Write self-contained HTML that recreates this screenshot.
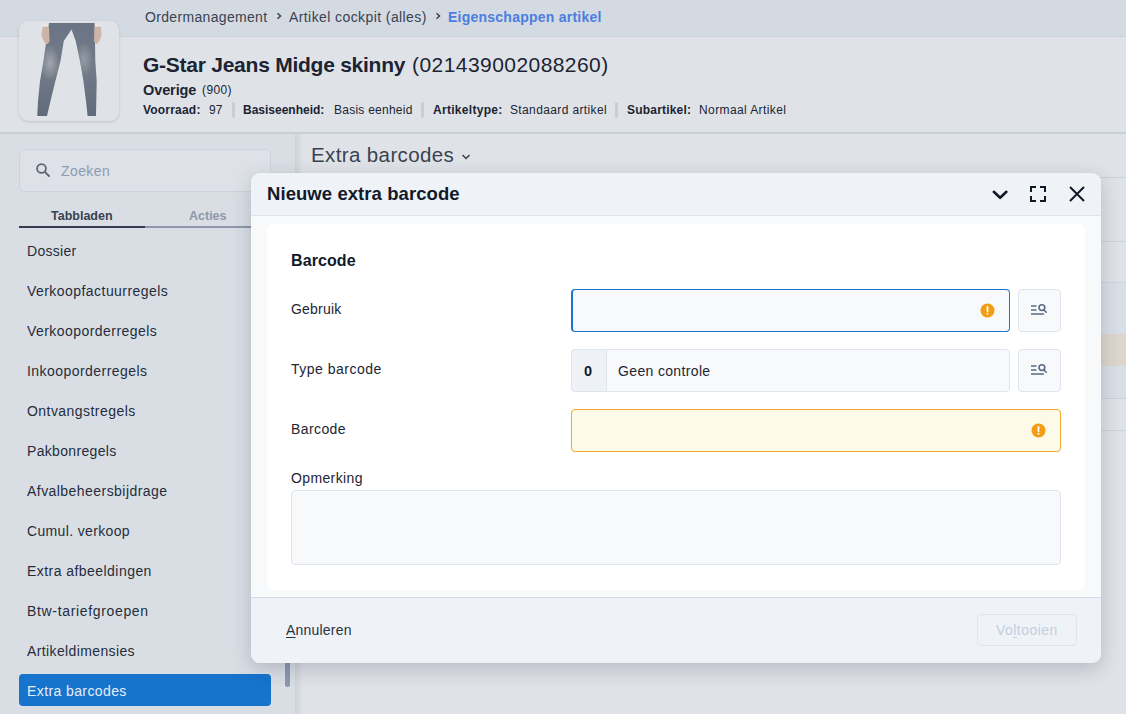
<!DOCTYPE html>
<html><head><meta charset="utf-8">
<style>
*{box-sizing:border-box;margin:0;padding:0}
html,body{width:1126px;height:714px;overflow:hidden}
body{font-family:"Liberation Sans",sans-serif;background:#dfe2e7;position:relative;color:#1e2533}
.t{position:absolute;white-space:nowrap;line-height:1}
.b{position:absolute}
</style></head><body>
<div class="b" style="left:0px;top:0px;width:1126px;height:134px;background:#dfe3e8"></div>
<div class="b" style="left:0px;top:0px;width:1126px;height:37px;background:#d4dae2;border-bottom:1px solid #c9d0da"></div>
<div class="b" style="left:0px;top:132px;width:1126px;height:2px;background:#c9cfd8"></div>
<div class="t" style="left:145px;top:10px;font-size:14px;color:#3a4251;letter-spacing:0.33px;">Ordermanagement</div>
<svg class="b" style="left:274px;top:10.5px" width="10" height="10" viewBox="0 0 10 10"><path d="M3.5 2.2 L6.5 5 L3.5 7.8" fill="none" stroke="#3a4251" stroke-width="1.5"/></svg>
<div class="t" style="left:289px;top:10px;font-size:14px;color:#3a4251;letter-spacing:0.41px;">Artikel cockpit (alles)</div>
<svg class="b" style="left:433px;top:10.5px" width="10" height="10" viewBox="0 0 10 10"><path d="M3.5 2.2 L6.5 5 L3.5 7.8" fill="none" stroke="#3a4251" stroke-width="1.5"/></svg>
<div class="t" style="left:448px;top:10px;font-size:14px;color:#4a7ee0;font-weight:bold;letter-spacing:0.24px;">Eigenschappen artikel</div>
<div class="b" style="left:19px;top:21px;width:100px;height:100px;background:#dfe3e8;border-radius:9px;box-shadow:0 1px 3px rgba(0,0,0,.14);overflow:hidden">
<svg width="100" height="100" viewBox="0 0 100 100">
<defs>
<radialGradient id="hl1" cx="31" cy="42" r="14" gradientUnits="userSpaceOnUse" gradientTransform="translate(31 42) scale(0.7 1.3) translate(-31 -42)"><stop offset="0" stop-color="#a0a6ad"/><stop offset="1" stop-color="#a0a6ad" stop-opacity="0"/></radialGradient><linearGradient id="dv" x1="0" y1="0" x2="0" y2="1"><stop offset="0" stop-color="#6b7485"/><stop offset=".5" stop-color="#737b89"/><stop offset="1" stop-color="#616a7a"/></linearGradient>
<radialGradient id="hl2" cx="65" cy="38" r="13" gradientUnits="userSpaceOnUse" gradientTransform="translate(65 38) scale(0.7 1.3) translate(-65 -38)"><stop offset="0" stop-color="#959ca6"/><stop offset="1" stop-color="#959ca6" stop-opacity="0"/></radialGradient>
</defs>
<path d="M25 2 L30 2 L30 20 L27 23 L23 18 L22 8 Z" fill="#e8e8e8"/>
<path d="M75 2 L80 2 L82 8 L82 18 L78 23 L76 20 Z" fill="#e8e8e8"/>
<path d="M30 2 L75.6 2 L76 20 L76.3 40 L77.7 60 L77.3 80 L77 95 L68.6 95 L67 80 L64.4 60 L61 40 L56.7 20 L52.5 8.4 L44.8 20 L41.5 40 L36.4 60 L31.5 80 L28 95 L18.2 95 L19 80 L21 60 L24.5 40 L27.3 20 Z" fill="url(#dv)"/>
<path d="M30 2 L75.6 2 L76 20 L76.3 40 L77.7 60 L77.3 80 L77 95 L68.6 95 L67 80 L64.4 60 L61 40 L56.7 20 L52.5 8.4 L44.8 20 L41.5 40 L36.4 60 L31.5 80 L28 95 L18.2 95 L19 80 L21 60 L24.5 40 L27.3 20 Z" fill="url(#hl1)"/>
<path d="M30 2 L75.6 2 L76 20 L76.3 40 L77.7 60 L77.3 80 L77 95 L68.6 95 L67 80 L64.4 60 L61 40 L56.7 20 L52.5 8.4 L44.8 20 L41.5 40 L36.4 60 L31.5 80 L28 95 L18.2 95 L19 80 L21 60 L24.5 40 L27.3 20 Z" fill="url(#hl2)"/>
<path d="M23.5 6 Q26 5 30 6 L30.5 20 Q29 24 27 23 Q23 19 22.5 13 Z" fill="#cdb4a6"/>
<path d="M75.5 6 Q79 5 82 6 L82.5 13 Q82 19 78 23 Q76 23 75 20 Z" fill="#cdb4a6"/>
</svg></div>
<div class="t" style="left:143px;top:54.2px;font-size:21px;color:#1c2333;font-weight:bold;letter-spacing:-0.25px;">G-Star Jeans Midge skinny</div>
<div class="t" style="left:412px;top:54.2px;font-size:21px;color:#1c2333;letter-spacing:0.44px;">(021439002088260)</div>
<div class="t" style="left:143px;top:82.7px;font-size:14.5px;color:#1c2333;font-weight:bold;letter-spacing:-0.1px;">Overige</div>
<div class="t" style="left:202px;top:84px;font-size:12px;color:#1c2333;letter-spacing:0.4px;">(900)</div>
<div class="t" style="left:143px;top:104px;font-size:12px;color:#1c2333;font-weight:bold;letter-spacing:0.2px;">Voorraad:</div>
<div class="t" style="left:209px;top:104px;font-size:12px;color:#1c2333;">97</div>
<div class="b" style="left:232px;top:102px;width:3px;height:16px;border-radius:2px;background:#c8cdd6"></div>
<div class="t" style="left:243px;top:104px;font-size:12px;color:#1c2333;font-weight:bold;">Basiseenheid:</div>
<div class="t" style="left:334px;top:104px;font-size:12px;color:#1c2333;letter-spacing:0.25px;">Basis eenheid</div>
<div class="b" style="left:421px;top:102px;width:3px;height:16px;border-radius:2px;background:#c8cdd6"></div>
<div class="t" style="left:433px;top:104px;font-size:12px;color:#1c2333;font-weight:bold;letter-spacing:0.3px;">Artikeltype:</div>
<div class="t" style="left:510px;top:104px;font-size:12px;color:#1c2333;letter-spacing:0.37px;">Standaard artikel</div>
<div class="b" style="left:615px;top:102px;width:3px;height:16px;border-radius:2px;background:#c8cdd6"></div>
<div class="t" style="left:627px;top:104px;font-size:12px;color:#1c2333;font-weight:bold;letter-spacing:0.2px;">Subartikel:</div>
<div class="t" style="left:699px;top:104px;font-size:12px;color:#1c2333;letter-spacing:0.4px;">Normaal Artikel</div>
<div class="b" style="left:0px;top:134px;width:295px;height:580px;background:#d9dee5"></div>
<div class="b" style="left:295px;top:134px;width:8px;height:580px;background:linear-gradient(to right,rgba(40,50,70,.09),rgba(40,50,70,0))"></div>
<div class="b" style="left:19px;top:149px;width:252px;height:43px;border:1px solid #cdd3dc;border-radius:5px;background:#dee2e8"></div>
<svg class="b" style="left:35px;top:162px" width="16" height="16" viewBox="0 0 16 16"><circle cx="6.5" cy="6.5" r="4.4" fill="none" stroke="#5d6778" stroke-width="1.8"/><path d="M9.8 9.8 L14 14" stroke="#5d6778" stroke-width="1.9" stroke-linecap="round"/></svg>
<div class="t" style="left:61px;top:164px;font-size:14px;color:#8d9bb0;letter-spacing:0.4px;">Zoeken</div>
<div class="t" style="left:51px;top:210px;font-size:12.5px;color:#3a4251;font-weight:bold;">Tabbladen</div>
<div class="t" style="left:189px;top:210px;font-size:12.5px;color:#8d98aa;font-weight:bold;">Acties</div>
<div class="b" style="left:19px;top:226px;width:126px;height:2px;background:#333d4f"></div>
<div class="b" style="left:145px;top:226px;width:126px;height:2px;background:#8d98aa"></div>
<div class="t" style="left:27px;top:244px;font-size:14px;color:#262d3a;letter-spacing:0.3px;">Dossier</div>
<div class="t" style="left:27px;top:284px;font-size:14px;color:#262d3a;letter-spacing:0.45px;">Verkoopfactuurregels</div>
<div class="t" style="left:27px;top:324px;font-size:14px;color:#262d3a;letter-spacing:0.45px;">Verkooporderregels</div>
<div class="t" style="left:27px;top:364px;font-size:14px;color:#262d3a;letter-spacing:0.45px;">Inkooporderregels</div>
<div class="t" style="left:27px;top:404px;font-size:14px;color:#262d3a;letter-spacing:0.45px;">Ontvangstregels</div>
<div class="t" style="left:27px;top:444px;font-size:14px;color:#262d3a;letter-spacing:0.33px;">Pakbonregels</div>
<div class="t" style="left:27px;top:484px;font-size:14px;color:#262d3a;letter-spacing:0.45px;">Afvalbeheersbijdrage</div>
<div class="t" style="left:27px;top:524px;font-size:14px;color:#262d3a;letter-spacing:0.35px;">Cumul. verkoop</div>
<div class="t" style="left:27px;top:564px;font-size:14px;color:#262d3a;letter-spacing:0.45px;">Extra afbeeldingen</div>
<div class="t" style="left:27px;top:604px;font-size:14px;color:#262d3a;letter-spacing:0.66px;">Btw-tariefgroepen</div>
<div class="t" style="left:27px;top:644px;font-size:14px;color:#262d3a;letter-spacing:0.38px;">Artikeldimensies</div>
<div class="b" style="left:19px;top:674px;width:252px;height:32px;background:#1674cc;border-radius:4px"></div>
<div class="t" style="left:27px;top:684px;font-size:14px;color:#e6edf7;letter-spacing:0.4px;">Extra barcodes</div>
<div class="b" style="left:285px;top:655px;width:5px;height:32px;border-radius:3px;background:#8b98ad"></div>
<div class="t" style="left:311px;top:144.5px;font-size:20.5px;color:#3a4251;letter-spacing:0.38px;">Extra barcodes</div>
<svg class="b" style="left:461px;top:153px" width="10" height="8" viewBox="0 0 10 8"><path d="M1.5 2 L5 5.5 L8.5 2" fill="none" stroke="#3a4251" stroke-width="1.5"/></svg>
<div class="b" style="left:1100px;top:177px;width:26px;height:1px;background:#c9d1dc"></div>
<div class="b" style="left:1100px;top:241px;width:26px;height:1px;background:#c9d1dc"></div>
<div class="b" style="left:1100px;top:282px;width:26px;height:52px;background:#d9dfe7;border-top:1px solid #cdd4de"></div>
<div class="b" style="left:1100px;top:334px;width:26px;height:32px;background:#ddd6cc"></div>
<div class="b" style="left:1100px;top:366px;width:26px;height:32px;background:#d9dfe7"></div>
<div class="b" style="left:1100px;top:398px;width:26px;height:1px;background:#c9d1dc"></div>
<div class="b" style="left:1100px;top:430px;width:26px;height:1px;background:#c9d1dc"></div>
<div class="b" style="left:251px;top:173px;width:850px;height:490px;background:#eff3f8;border-radius:9px;box-shadow:0 6px 20px rgba(20,30,50,.20);overflow:hidden">
<div class="b" style="left:0px;top:43px;width:850px;height:381px;background:#f7f9fb"></div>
<div class="b" style="left:0px;top:42px;width:850px;height:1px;background:#dce3eb"></div>
<div class="t" style="left:16px;top:12px;font-size:18.5px;color:#121a2a;font-weight:bold;letter-spacing:0.07px;">Nieuwe extra barcode</div>
<svg class="b" style="left:739px;top:14px" width="20" height="16" viewBox="0 0 20 16"><path d="M3.8 4.8 L10.1 10.8 L16.4 4.8" fill="none" stroke="#111827" stroke-width="2.6" stroke-linecap="round" stroke-linejoin="round"/></svg>
<svg class="b" style="left:779px;top:13px" width="16" height="16" viewBox="0 0 16 16"><path d="M1 6 V1 H6 M10 1 H15 V6 M15 10 V15 H10 M6 15 H1 V10" fill="none" stroke="#111827" stroke-width="2"/></svg>
<svg class="b" style="left:817px;top:12px" width="18" height="18" viewBox="0 0 18 18"><path d="M2 2 L16 16 M16 2 L2 16" fill="none" stroke="#111827" stroke-width="2"/></svg>
<div class="b" style="left:16px;top:51px;width:818px;height:366px;background:#fff;border-radius:5px"></div>
<div class="t" style="left:40px;top:80.3px;font-size:16px;color:#121a2a;font-weight:bold;letter-spacing:0.1px;">Barcode</div>
<div class="t" style="left:40px;top:129px;font-size:14px;color:#1e2533;letter-spacing:0.2px;">Gebruik</div>
<div class="t" style="left:40px;top:189px;font-size:14px;color:#1e2533;letter-spacing:0.5px;">Type barcode</div>
<div class="t" style="left:40px;top:249px;font-size:14px;color:#1e2533;letter-spacing:0.4px;">Barcode</div>
<div class="t" style="left:40px;top:298px;font-size:14px;color:#1e2533;letter-spacing:0.37px;">Opmerking</div>
<div class="b" style="left:320px;top:116px;width:439px;height:43px;border:1.5px solid #1a73d0;border-left-width:2px;border-radius:4px;background:#f7f9fb"></div>
<svg class="b" style="left:729px;top:130px" width="15" height="15" viewBox="0 0 15 15"><circle cx="7.5" cy="7.5" r="7" fill="#f29d12"/><path d="M7.5 3.8 V8.2" stroke="#fff" stroke-width="1.8" stroke-linecap="round"/><circle cx="7.5" cy="10.8" r="1" fill="#fff"/></svg>
<div class="b" style="left:767px;top:116px;width:43px;height:43px;border:1px solid #dfe5ed;border-radius:4px;background:#f7f9fb"></div>
<svg class="b" style="left:779px;top:130px" width="20" height="14" viewBox="0 0 20 14"><path d="M1 3 H6.5 M1 7 H6.5 M1 11 H14" stroke="#5a6b85" stroke-width="1.6"/><circle cx="11.9" cy="4.6" r="2.9" fill="none" stroke="#5a6b85" stroke-width="1.6"/><path d="M14 7 L16.2 9.2" stroke="#5a6b85" stroke-width="1.6" stroke-linecap="round"/></svg>
<div class="b" style="left:320px;top:176px;width:439px;height:43px;border:1px solid #dfe5ed;border-radius:4px;background:#f7f9fb"></div>
<div class="b" style="left:320px;top:176px;width:36px;height:43px;background:#eef2f7;border:1px solid #dfe5ed;border-radius:4px 0 0 4px"></div>
<div class="t" style="left:333px;top:190.5px;font-size:14.5px;color:#121a2a;font-weight:bold;">0</div>
<div class="t" style="left:367px;top:191px;font-size:14px;color:#1e2533;letter-spacing:0.35px;">Geen controle</div>
<div class="b" style="left:767px;top:176px;width:43px;height:43px;border:1px solid #dfe5ed;border-radius:4px;background:#f7f9fb"></div>
<svg class="b" style="left:779px;top:190px" width="20" height="14" viewBox="0 0 20 14"><path d="M1 3 H6.5 M1 7 H6.5 M1 11 H14" stroke="#5a6b85" stroke-width="1.6"/><circle cx="11.9" cy="4.6" r="2.9" fill="none" stroke="#5a6b85" stroke-width="1.6"/><path d="M14 7 L16.2 9.2" stroke="#5a6b85" stroke-width="1.6" stroke-linecap="round"/></svg>
<div class="b" style="left:320px;top:236px;width:490px;height:43px;border:1.5px solid #f0a830;border-radius:4px;background:#fefae8"></div>
<svg class="b" style="left:780px;top:250px" width="15" height="15" viewBox="0 0 15 15"><circle cx="7.5" cy="7.5" r="7" fill="#f29d12"/><path d="M7.5 3.8 V8.2" stroke="#fff" stroke-width="1.8" stroke-linecap="round"/><circle cx="7.5" cy="10.8" r="1" fill="#fff"/></svg>
<div class="b" style="left:40px;top:317px;width:770px;height:75px;border:1px solid #dfe5ed;border-radius:4px;background:#f7f9fb"></div>
<div class="b" style="left:0px;top:424px;width:850px;height:66px;border-top:1px solid #d0d9e4;background:#eff3f8"></div>
<div class="t" style="left:35px;top:450px;font-size:14px;color:#2a3140;letter-spacing:0.2px;"><span style="text-decoration:underline;text-underline-offset:2px">A</span>nnuleren</div>
<div class="b" style="left:726px;top:441px;width:100px;height:32px;border:1px solid #dfe5ec;border-radius:4px"></div>
<div class="t" style="left:745px;top:450px;font-size:14px;color:#c3cedd;letter-spacing:0.45px;">Vo<span style="text-decoration:underline;text-underline-offset:2px">l</span>tooien</div>
</div>
</body></html>
